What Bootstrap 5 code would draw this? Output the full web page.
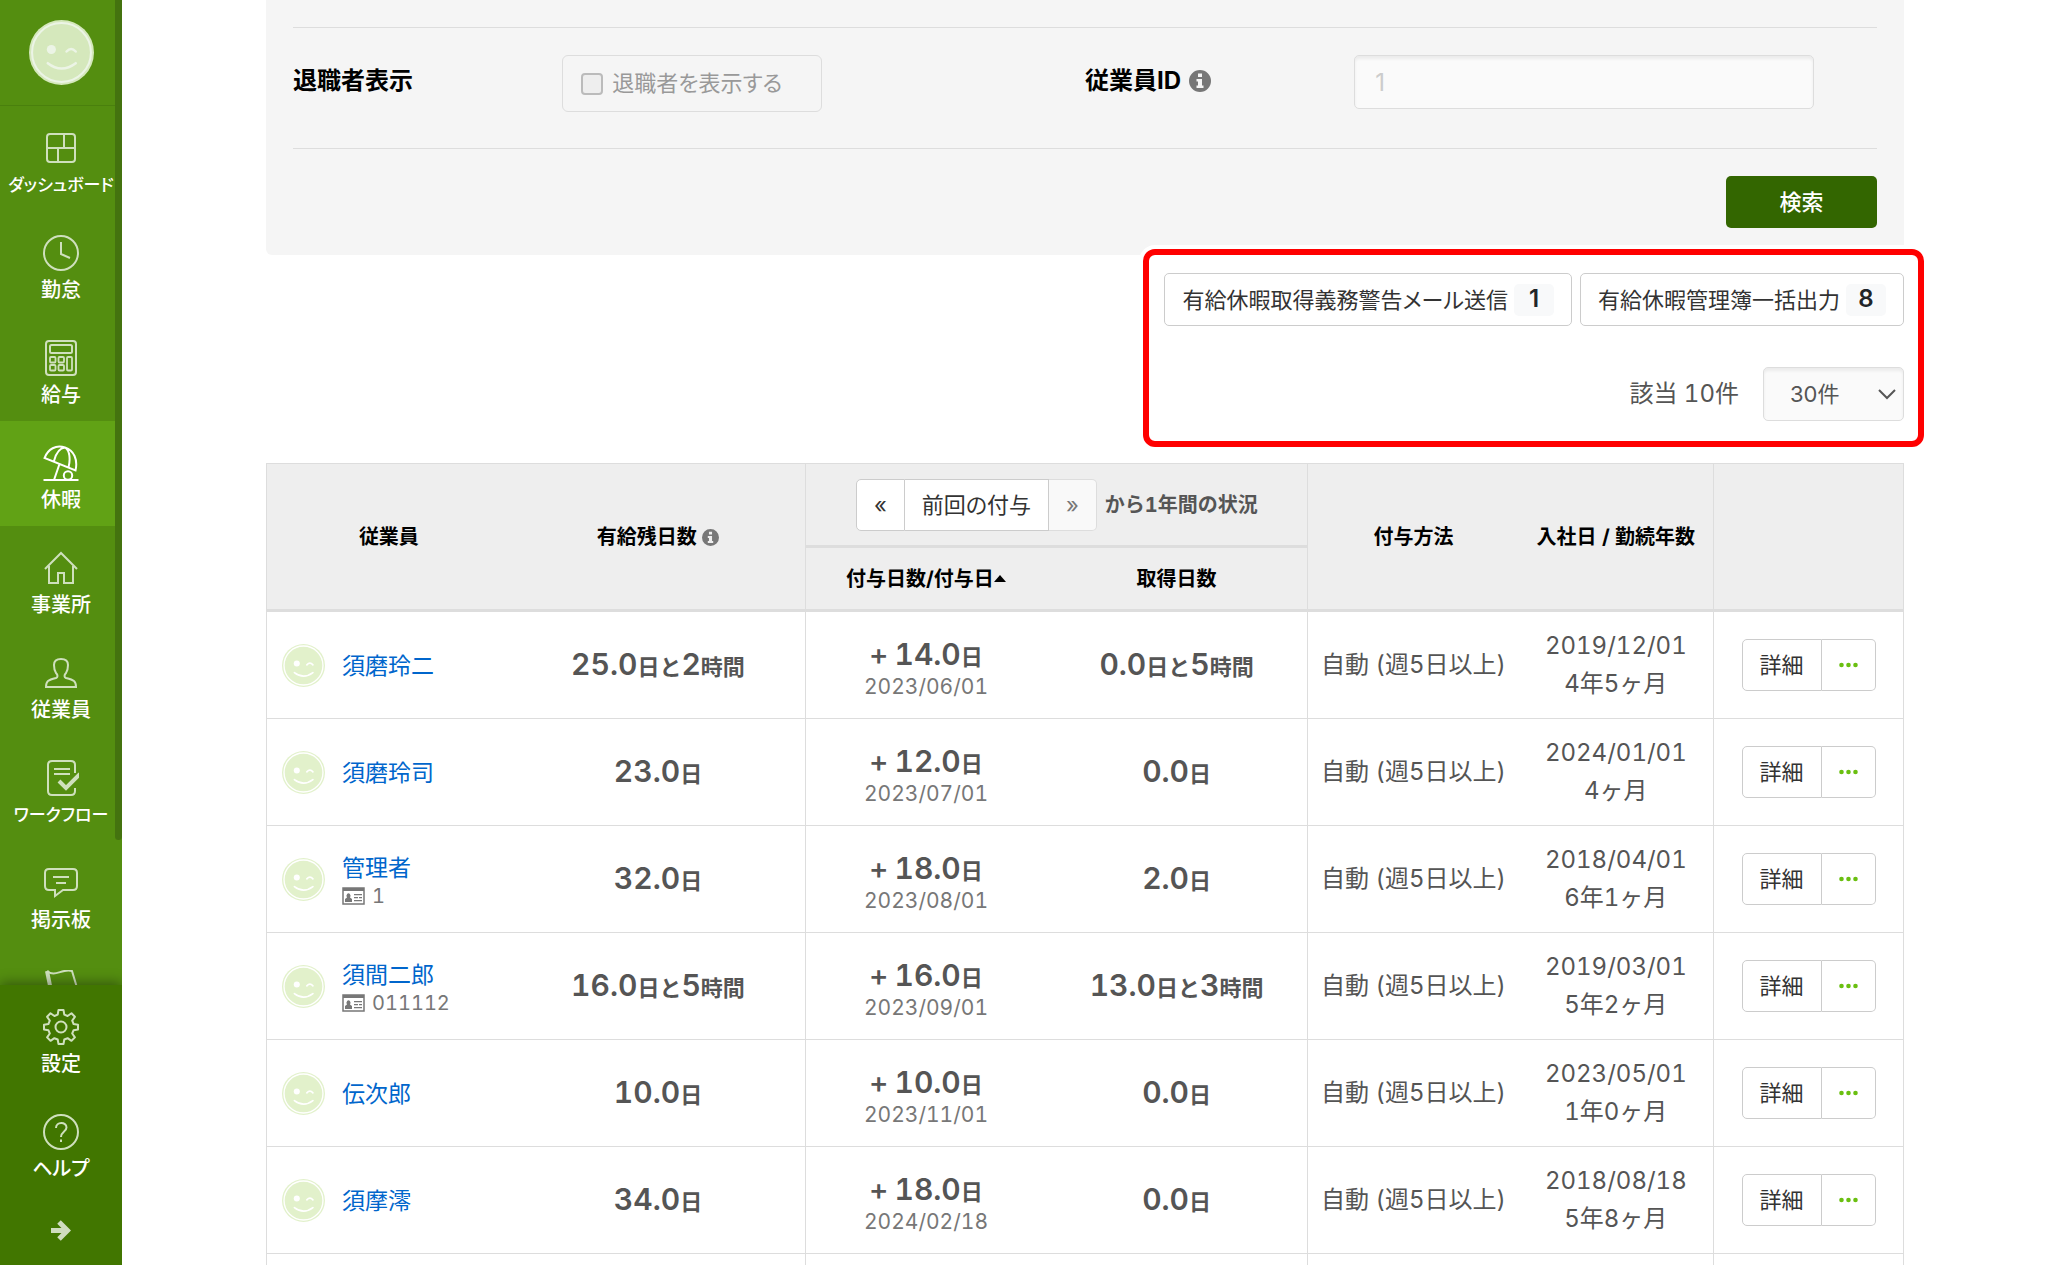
<!DOCTYPE html>
<html lang="ja">
<head>
<meta charset="utf-8">
<meta name="viewport" content="width=device-width, initial-scale=1">
<title>休暇管理</title>
<link href="https://cdn.jsdelivr.net/npm/bootstrap@5.3.0/dist/css/bootstrap.min.css" rel="stylesheet">
<style>
  body { font-family: Inter, "Noto Sans CJK JP", sans-serif; font-size: 24px; line-height: 1.5; color: #555; font-variant-numeric: tabular-nums; }

  /* sidebar */
  .side { width: 122px; background: #548e10; }
  .side-user { height: 106px; border-bottom: 1px solid #4a800d; }
  .side-user svg { width: 65px; height: 65px; --face: #d5e8bc; --line: #ecf4e6; }
  .side-item { height: 105px; padding-top: 24px; color: #fff; font-size: 20px; font-weight: 500; line-height: 24px; text-decoration: none; white-space: nowrap; font-feature-settings: "palt"; }
  .side-item svg { width: 36px; height: 36px; margin-bottom: 7px; fill: none; stroke: #cfe0bd; stroke-width: 2; }
  .side-item.active { background: #61a215; }
  .side-item.active svg { stroke: #fff; }
  .side-item.tight { font-size: 17px; }
  .side-scroll { width: 7px; height: 840px; background: #44730f; border-radius: 0 0 4px 4px; }
  .side-foot { background: #417600; box-shadow: 0 -2px 12px rgba(0,0,0,.4); }
  .side-more { height: 70px; }

  .face-svg { --face: #e2f1cb; --line: #fff; width: 43px; height: 43px; }
  .page-main { padding: 0 144px; }

  /* search panel */
  .search-panel { background: #f5f5f5; border-radius: 0 0 6px 6px; padding: 27px; }
  .search-row { border-top: 1px solid #ddd; border-bottom: 1px solid #ddd; padding: 27px 0 36px; }
  .search-label { width: 34%; color: #000; font-weight: 700; line-height: 52px; }
  .retire-box { border: 1px solid #ddd; border-radius: 6px; padding: 0 39px 0 18px; height: 57px; color: #999; font-size: 22px; gap: 9px; font-feature-settings: "palt"; }
  .retire-box input { appearance: none; width: 22px; height: 22px; margin: 0; border: 2px solid #bbb; border-radius: 4px; background: #eee; }
  .id-input { max-width: 460px; height: 54px; margin-right: 63px; border: 1px solid #ddd; border-radius: 5px; background: #fafafa; padding: 0 20px; font-size: 24px; box-shadow: inset 0 3px 3px rgba(0,0,0,.06); }
  .id-input::placeholder { color: #ccc; }
  .info-svg { width: 22px; height: 22px; fill: #777; }
  .btn-search { width: 151px; height: 52px; margin-top: 27px; background: #360; color: #fff; font-size: 22px; border: 0; border-radius: 5px; font-weight: 500; }
  .btn-search:hover { background: #2b5600; color: #fff; }

  /* toolbar */
  .tools { width: fit-content; margin-top: 18px; margin-bottom: 42px; row-gap: 41px; }
  .btn-line { display: inline-flex; align-items: center; justify-content: center; height: 53px; padding: 0 17px; background: #fff; border: 1px solid #ccc; border-radius: 5px; color: #333; font-size: 22px; line-height: 1; font-feature-settings: "palt"; }
  .count-chip { background: #f8f9fa; border-radius: 5px; width: 40px; height: 32px; margin-left: 6px; font-size: 24px; font-weight: 600; line-height: 30px; color: #212529; }
  .size-select { width: 141px; height: 54px; padding: 0 26px; font-size: 22px; color: #555; border: 1px solid #ddd; border-radius: 5px; background-color: #fafafa; box-shadow: inset 0 3px 3px rgba(0,0,0,.06);
    background-image: url("data:image/svg+xml,%3Csvg xmlns='http://www.w3.org/2000/svg' viewBox='0 0 18 12'%3E%3Cpath d='M1 2l8 8 8-8' fill='none' stroke='%23555' stroke-width='2'/%3E%3C/svg%3E"); background-size: 18px 12px; background-position: right 7px center; }
  .callout-frame { position: absolute; inset: -24px -20px -26px -21px; border: 6px solid #f00; border-radius: 12px; box-shadow: 0 0 0 4px #fff; pointer-events: none; }

  /* leave table */
  .leave-table { table-layout: fixed; border-collapse: separate; border-spacing: 0; width: 100%; border: 1px solid #ddd; text-align: center; vertical-align: middle; }
  .leave-table th { background: #eee; color: #000; font-size: 20px; font-weight: 700; line-height: 30px; padding: 0; white-space: nowrap; border-bottom: 3px solid #ddd; }
  .leave-table td { padding: 0; height: 107px; border-bottom: 1px solid #ddd; white-space: nowrap; }
  .leave-table .edge { border-left: 1px solid #ddd; }
  .head-a { height: 84px; }
  .head-b { height: 64px; }
  .leave-table .info-svg { width: 17px; height: 17px; vertical-align: -2px; }
  .period-text { color: #555; }
  .period .btn-line { font-weight: 400; height: 52px; }
  .period .btn-line:disabled { opacity: 1; background: #f9f9f9; border-color: #ddd; color: #777; }
  .sort-mark { width: 0; height: 0; border: 6px solid transparent; border-top: 0; border-bottom: 7px solid #000; }
  .emp { padding: 1px 0 0 15px; gap: 17px; text-align: left; line-height: 32px; }
  .emp a { color: #06c; text-decoration: none; font-size: 23px; }
  .emp-id { color: #777; font-size: 20px; line-height: 24px; gap: 7px; }
  .emp-id svg { width: 23px; height: 18px; }
  .amount { font-size: 22px; font-weight: 700; line-height: 32px; }
  .amount b { font-size: 30px; font-weight: 600; }
  .amount i { font-size: 30px; font-style: normal; font-weight: 500; }
  .grant { padding-top: 9px; }
  .grant-date { font-size: 21px; line-height: 28px; color: #777; }
  .joined { line-height: 38px; }
  .row-acts .btn-line { height: 52px; }
  .row-acts svg { width: 19px; height: 6px; fill: #6abf10; }
</style>
<script src="https://cdn.jsdelivr.net/npm/bootstrap@5.3.0/dist/js/bootstrap.bundle.min.js"></script>
</head>
<body class="bg-white">
<svg class="d-none">
  <symbol id="face" viewBox="-32 -32 64 64">
    <circle r="32" fill="var(--face)"/>
    <g fill="none" stroke="var(--line)" stroke-width="2" stroke-linecap="round">
      <circle r="29"/><path stroke-width="2.500" d="M5-1q4.500-5 9 0"/><path stroke-width="2.500" d="M-13.500 10.500Q0 21 14 10.500"/>
    </g>
    <circle cx="-10" cy="-3" r="4.500" fill="var(--line)"/>
  </symbol>
  <symbol id="info" viewBox="0 0 22 22"><path fill-rule="evenodd" d="M11 0a11 11 0 1 0 0 22 11 11 0 0 0 0-22zM9 3.500h4v3.500H9zM7.500 9H13v6.500h1.500V18h-7v-2.500H9v-4H7.500z"/></symbol>
  <symbol id="idcard" viewBox="0 0 23 18"><path d="M1 1h21v16H1z" fill="none" stroke="#777" stroke-width="1.500"/><path d="M1 1h21v3H1z" fill="#777"/><path d="M3 15v-3l2-1.500a2 2.500 0 1 1 3 0l2 1.500v3zM12 7h8v1.200h-8zM12 10h4v1.200h-4zM17 10h3v1.200h-3zM12 13h8v1.200h-8z" fill="#777"/></symbol>
  <symbol id="dots" viewBox="0 0 19 6"><circle cx="2.500" cy="3" r="2.300"/><circle cx="9.500" cy="3" r="2.300"/><circle cx="16.500" cy="3" r="2.300"/></symbol>
</svg>

<div class="d-flex vh-100 overflow-hidden">
  <aside class="side position-relative overflow-hidden d-flex flex-column flex-shrink-0">
    <div class="side-user d-flex align-items-center justify-content-center flex-shrink-0"><svg><use href="#face"/></svg></div>
    <nav class="flex-grow-1 overflow-hidden">
      <a href="#" class="side-item d-flex flex-column align-items-center tight"><svg viewBox="0 0 36 36"><rect x="4" y="4" width="28" height="28" rx="3"/><path d="M4 18h28M21 4v14M15 18v14"/></svg>ダッシュボード</a>
      <a href="#" class="side-item d-flex flex-column align-items-center"><svg viewBox="0 0 36 36"><circle cx="18" cy="18" r="17"/><path d="M18 7v12l9 4"/></svg>勤怠</a>
      <a href="#" class="side-item d-flex flex-column align-items-center"><svg viewBox="0 0 36 36"><rect x="3" y="1" width="30" height="34" rx="3"/><rect x="7" y="5" width="22" height="8" rx="1.500"/><g stroke-width="1.800"><rect x="7" y="17" width="5.500" height="5.500" rx="1"/><rect x="15.500" y="17" width="5.500" height="5.500" rx="1"/><rect x="7" y="25" width="5.500" height="5.500" rx="1"/><rect x="15.500" y="25" width="5.500" height="5.500" rx="1"/><rect x="24" y="17" width="5" height="13.500" rx="1"/></g></svg>給与</a>
      <a href="#" class="side-item active d-flex flex-column align-items-center"><svg viewBox="0 0 36 36"><path d="M1.500 13C5 4 13-.5 22 2.500s13 12 10.500 23zM11 16C13 8 17 3 22 2.500c5 3 5.500 12 3.500 20M16.500 19L11 35M.5 35h35"/><circle cx="25" cy="30.500" r="4.200"/></svg>休暇</a>
      <a href="#" class="side-item d-flex flex-column align-items-center"><svg viewBox="0 0 36 36"><path d="M2 19L18 3l16 16M6 16v17h9V23h6v10h9V16"/></svg>事業所</a>
      <a href="#" class="side-item d-flex flex-column align-items-center"><svg viewBox="0 0 36 36"><path d="M3 32c0-6 2-7 10-9 2-1 2-3 0-5-2-3-2-5-2-8 0-4 3-6 7-6s7 2 7 6c0 3 0 5-2 8-2 2-2 4 0 5 8 2 10 3 10 9z"/></svg>従業員</a>
      <a href="#" class="side-item d-flex flex-column align-items-center tight"><svg viewBox="0 0 36 36"><path d="M32 13V5q0-4-4-4H9Q5 1 5 5v26q0 4 4 4h19q4 0 4-4v-3M11 9h16M11 14h16"/><path d="M16 21l7 7 14-14" stroke-width="4"/></svg>ワークフロー</a>
      <a href="#" class="side-item d-flex flex-column align-items-center"><svg viewBox="0 0 36 36"><path d="M6 4h24q4 0 4 4v13q0 4-4 4H20l-8 6v-6H6q-4 0-4-4V8q0-4 4-4zM10 12h16M13 18h10"/></svg>掲示板</a>
      <a href="#" class="side-item d-flex flex-column align-items-center" aria-label="その他"><svg viewBox="0 0 36 36"><path d="M4 1l7 34" stroke-width="4"/><path d="M4 1c8 7 15-3 25 0l6 20c-9-3-15 5-24 0"/></svg></a>
    </nav>
    <div class="side-foot position-relative flex-shrink-0">
      <a href="#" class="side-item d-flex flex-column align-items-center"><svg viewBox="0 0 36 36"><circle cx="18" cy="18" r="5.500"/><path stroke-linejoin="round" d="M15.500 1h5l.8 4.600 3.300 1.400 3.900-2.700 3.400 3.500-2.700 3.800 1.400 3.400 4.400.7v4.700l-4.400.8-1.400 3.300 2.700 3.900-3.400 3.400-3.900-2.600-3.300 1.300-.8 4.500h-5l-.8-4.500-3.300-1.300-3.900 2.600-3.400-3.400 2.700-3.900-1.400-3.300L1 20.400v-4.700l4.400-.7 1.400-3.400-2.700-3.800 3.400-3.500L11.400 7l3.300-1.400z"/></svg>設定</a>
      <a href="#" class="side-item d-flex flex-column align-items-center"><svg viewBox="0 0 36 36"><circle cx="18" cy="18" r="17"/><path d="M13 14c0-6.500 10.500-6.500 10.500-.5 0 4-5.500 4-5.500 9.500M18 25.500v2.500"/></svg>ヘルプ</a>
      <a href="#" aria-label="開く" class="side-more d-flex align-items-center justify-content-center"><svg width="20" height="21" viewBox="0 0 20 21" fill="none" stroke="#cfdcbf" stroke-width="5"><path d="M0 10.500h16M8 2l8.500 8.500L8 19"/></svg></a>
    </div>
    <div class="side-scroll position-absolute top-0 end-0"></div>
  </aside>

  <main class="page-main flex-grow-1">
    <form class="search-panel">
      <div class="search-row row g-0">
        <div class="col-6 d-flex align-items-start">
          <div class="search-label">退職者表示</div>
          <label class="retire-box d-flex align-items-center"><input type="checkbox" disabled>退職者を表示する</label>
        </div>
        <div class="col-6 d-flex align-items-start">
          <label class="search-label d-flex align-items-center gap-2 flex-shrink-0" for="empid">従業員ID<svg class="info-svg"><use href="#info"/></svg></label>
          <input class="id-input form-control" id="empid" type="text" placeholder="1">
        </div>
      </div>
      <div class="d-flex justify-content-end"><button type="button" class="btn btn-search">検索</button></div>
    </form>

    <div class="tools ms-auto position-relative d-flex flex-column align-items-end">
      <div class="d-flex gap-2">
        <button type="button" class="btn-line">有給休暇取得義務警告メール送信<span class="count-chip">1</span></button>
        <button type="button" class="btn-line">有給休暇管理簿一括出力<span class="count-chip">8</span></button>
      </div>
      <div class="d-flex align-items-center gap-4">
        <label for="pagesize">該当 10件</label>
        <select id="pagesize" class="form-select size-select"><option>30件</option><option>50件</option></select>
      </div>
      <div class="callout-frame"></div>
    </div>

    <table class="leave-table">
      <colgroup><col style="width:14.9%"><col style="width:18%"><col style="width:14.7%"><col style="width:16%"><col style="width:12.9%"><col style="width:11.9%"><col style="width:11.6%"></colgroup>
      <thead>
        <tr class="head-a">
          <th rowspan="2">従業員</th>
          <th rowspan="2">有給残日数 <svg class="info-svg"><use href="#info"/></svg></th>
          <th colspan="2" class="edge"><div class="d-flex align-items-center justify-content-center gap-2">
            <div class="btn-group period"><button type="button" class="btn-line rounded-end-0">«</button><button type="button" class="btn-line rounded-0 border-start-0">前回の付与</button><button type="button" class="btn-line rounded-start-0 border-start-0" disabled>»</button></div>
            <span class="period-text">から1年間の状況</span></div></th>
          <th rowspan="2" class="edge">付与方法</th>
          <th rowspan="2">入社日 / 勤続年数</th>
          <th rowspan="2" class="edge"></th>
        </tr>
        <tr class="head-b">
          <th class="edge"><span class="d-inline-flex align-items-center">付与日数/付与日<span class="sort-mark"></span></span></th>
          <th>取得日数</th>
        </tr>
      </thead>
      <tbody>
        <tr>
          <td><div class="emp d-flex align-items-center"><svg class="face-svg"><use href="#face"/></svg><a href="#">須磨玲二</a></div></td>
          <td class="amount"><b>25.0</b>日と<b>2</b>時間</td>
          <td class="edge"><div class="grant"><div class="amount"><i>+</i> <b>14.0</b>日</div><div class="grant-date">2023/06/01</div></div></td>
          <td class="amount"><b>0.0</b>日と<b>5</b>時間</td>
          <td class="edge">自動 (週5日以上)</td>
          <td class="joined">2019/12/01<br>4年5ヶ月</td>
          <td class="edge"><div class="btn-group row-acts"><button type="button" class="btn-line rounded-end-0">詳細</button><button type="button" class="btn-line rounded-start-0 border-start-0" aria-label="メニュー"><svg><use href="#dots"/></svg></button></div></td>
        </tr>
        <tr>
          <td><div class="emp d-flex align-items-center"><svg class="face-svg"><use href="#face"/></svg><a href="#">須磨玲司</a></div></td>
          <td class="amount"><b>23.0</b>日</td>
          <td class="edge"><div class="grant"><div class="amount"><i>+</i> <b>12.0</b>日</div><div class="grant-date">2023/07/01</div></div></td>
          <td class="amount"><b>0.0</b>日</td>
          <td class="edge">自動 (週5日以上)</td>
          <td class="joined">2024/01/01<br>4ヶ月</td>
          <td class="edge"><div class="btn-group row-acts"><button type="button" class="btn-line rounded-end-0">詳細</button><button type="button" class="btn-line rounded-start-0 border-start-0" aria-label="メニュー"><svg><use href="#dots"/></svg></button></div></td>
        </tr>
        <tr>
          <td><div class="emp d-flex align-items-center"><svg class="face-svg"><use href="#face"/></svg><div><a href="#">管理者</a><div class="emp-id d-flex align-items-center"><svg><use href="#idcard"/></svg>1</div></div></div></td>
          <td class="amount"><b>32.0</b>日</td>
          <td class="edge"><div class="grant"><div class="amount"><i>+</i> <b>18.0</b>日</div><div class="grant-date">2023/08/01</div></div></td>
          <td class="amount"><b>2.0</b>日</td>
          <td class="edge">自動 (週5日以上)</td>
          <td class="joined">2018/04/01<br>6年1ヶ月</td>
          <td class="edge"><div class="btn-group row-acts"><button type="button" class="btn-line rounded-end-0">詳細</button><button type="button" class="btn-line rounded-start-0 border-start-0" aria-label="メニュー"><svg><use href="#dots"/></svg></button></div></td>
        </tr>
        <tr>
          <td><div class="emp d-flex align-items-center"><svg class="face-svg"><use href="#face"/></svg><div><a href="#">須間二郎</a><div class="emp-id d-flex align-items-center"><svg><use href="#idcard"/></svg>011112</div></div></div></td>
          <td class="amount"><b>16.0</b>日と<b>5</b>時間</td>
          <td class="edge"><div class="grant"><div class="amount"><i>+</i> <b>16.0</b>日</div><div class="grant-date">2023/09/01</div></div></td>
          <td class="amount"><b>13.0</b>日と<b>3</b>時間</td>
          <td class="edge">自動 (週5日以上)</td>
          <td class="joined">2019/03/01<br>5年2ヶ月</td>
          <td class="edge"><div class="btn-group row-acts"><button type="button" class="btn-line rounded-end-0">詳細</button><button type="button" class="btn-line rounded-start-0 border-start-0" aria-label="メニュー"><svg><use href="#dots"/></svg></button></div></td>
        </tr>
        <tr>
          <td><div class="emp d-flex align-items-center"><svg class="face-svg"><use href="#face"/></svg><a href="#">伝次郎</a></div></td>
          <td class="amount"><b>10.0</b>日</td>
          <td class="edge"><div class="grant"><div class="amount"><i>+</i> <b>10.0</b>日</div><div class="grant-date">2023/11/01</div></div></td>
          <td class="amount"><b>0.0</b>日</td>
          <td class="edge">自動 (週5日以上)</td>
          <td class="joined">2023/05/01<br>1年0ヶ月</td>
          <td class="edge"><div class="btn-group row-acts"><button type="button" class="btn-line rounded-end-0">詳細</button><button type="button" class="btn-line rounded-start-0 border-start-0" aria-label="メニュー"><svg><use href="#dots"/></svg></button></div></td>
        </tr>
        <tr>
          <td><div class="emp d-flex align-items-center"><svg class="face-svg"><use href="#face"/></svg><a href="#">須摩澪</a></div></td>
          <td class="amount"><b>34.0</b>日</td>
          <td class="edge"><div class="grant"><div class="amount"><i>+</i> <b>18.0</b>日</div><div class="grant-date">2024/02/18</div></div></td>
          <td class="amount"><b>0.0</b>日</td>
          <td class="edge">自動 (週5日以上)</td>
          <td class="joined">2018/08/18<br>5年8ヶ月</td>
          <td class="edge"><div class="btn-group row-acts"><button type="button" class="btn-line rounded-end-0">詳細</button><button type="button" class="btn-line rounded-start-0 border-start-0" aria-label="メニュー"><svg><use href="#dots"/></svg></button></div></td>
        </tr>
        <tr><td></td><td></td><td class="edge"></td><td></td><td class="edge"></td><td></td><td class="edge"></td></tr>
      </tbody>
    </table>
  </main>
</div>
</body>
</html>
